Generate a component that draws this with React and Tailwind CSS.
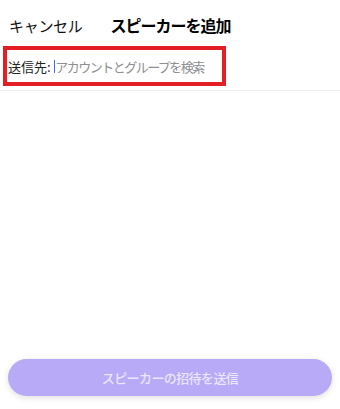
import React from 'react';

const font = { fontFamily: '"Noto Sans CJK JP", "Noto Sans", sans-serif' };

const App = () => {
  return (
    <div className="w-[340px] h-[409px] bg-white flex flex-col" style={font}>
      {/* ヘッダー */}
      <div className="h-[46px] pt-[4px] flex items-center pl-[9px] gap-[28px]">
        <button className="text-[15px] text-[#111] leading-none tracking-[-0.3px]">キャンセル</button>
        <h1 className="text-[16px] font-bold text-black leading-none tracking-[-1px]">スピーカーを追加</h1>
      </div>

      {/* 送信先 */}
      <div className="h-[45px] border-b border-[#ededed] pl-[3px]">
        <div className="w-[223px] h-[40px] border-4 border-[#e31e25] flex items-center pl-[1px] pt-[1px]">
          <span className="text-[13px] text-[#222] leading-none">送信先:</span>
          <span className="ml-[3px] w-[1.5px] h-[13px] bg-[#3b6fe0]"></span>
          <span className="text-[13px] text-[#8e8e93] leading-none tracking-[-1.5px]">アカウントとグループを検索</span>
        </div>
      </div>

      <div className="flex-1"></div>

      {/* 送信ボタン */}
      <div className="px-[8px] pb-[13px]">
        <button className="w-full h-[37px] rounded-full bg-[#b8aaf6] shadow-[0_2px_6px_rgba(0,0,0,0.12)] flex items-center justify-center">
          <span className="text-[13px] font-medium text-[#ebe6fd] tracking-[-0.6px]">スピーカーの招待を送信</span>
        </button>
      </div>
    </div>
  );
};

export default App;
